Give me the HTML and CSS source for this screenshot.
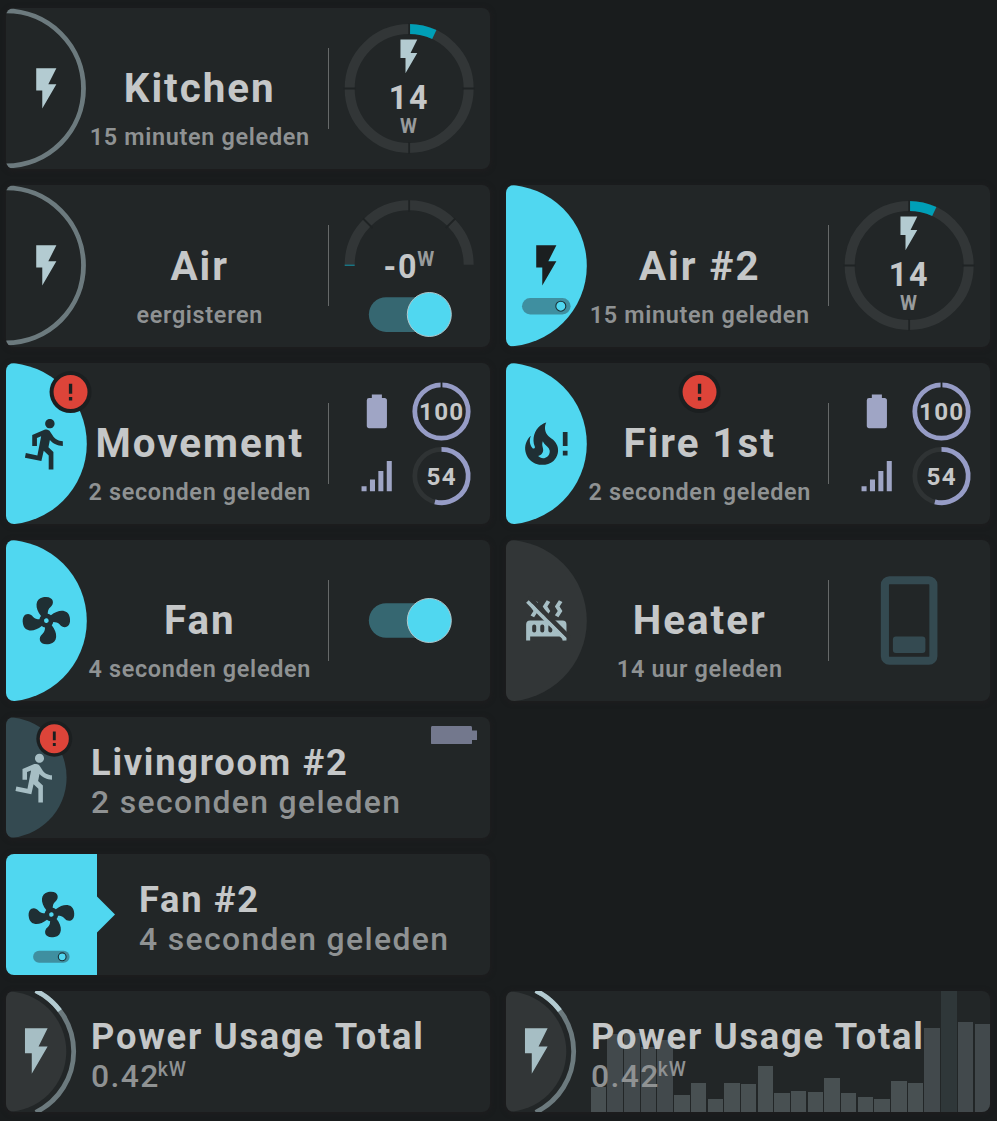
FILE: index.html
```html
<!DOCTYPE html>
<html lang="nl">
<head>
<meta charset="utf-8">
<title>Dashboard</title>
<link rel="stylesheet" href="styles.css">
</head>
<body>
<svg class="defs" aria-hidden="true">
  <symbol id="flash" viewBox="0 0 24 24"><path d="M7,2V13H10V22L17,10H13L17,2H7Z"/></symbol>
  <symbol id="run" viewBox="0 0 24 24"><path d="M13.5,5.5C14.59,5.5 15.5,4.58 15.5,3.5C15.5,2.38 14.59,1.5 13.5,1.5C12.39,1.5 11.5,2.38 11.5,3.5C11.5,4.58 12.39,5.5 13.5,5.5M9.89,19.38L10.89,15L13,17V23H15V15.5L12.89,13.5L13.5,10.5C14.79,12 16.79,13 19,13V11C17.09,11 15.5,10 14.69,8.58L13.69,7C13.29,6.38 12.69,6 12,6C11.69,6 11.5,6.08 11.19,6.08L6,8.28V13H8V9.58L9.79,8.88L8.19,17L3.29,16L2.89,18L9.89,19.38Z"/></symbol>
  <symbol id="fire" viewBox="0 0 24 24"><path transform="translate(-2 0)" d="M17.66 11.2C17.43 10.9 17.15 10.64 16.89 10.38C16.22 9.78 15.46 9.35 14.82 8.72C13.33 7.26 13 4.85 13.95 3C13 3.23 12.17 3.75 11.46 4.32C8.87 6.4 7.85 10.07 9.07 13.22C9.11 13.32 9.15 13.42 9.15 13.55C9.15 13.77 9 13.97 8.8 14.05C8.57 14.15 8.33 14.09 8.14 13.93C8.08 13.88 8.04 13.83 8 13.76C6.87 12.33 6.69 10.28 7.45 8.64C5.78 10 4.87 12.3 5 14.47C5.06 14.97 5.12 15.47 5.29 15.97C5.43 16.57 5.7 17.17 6 17.7C7.08 19.43 8.95 20.67 10.96 20.92C13.1 21.19 15.39 20.8 17.03 19.32C18.86 17.66 19.5 15 18.56 12.72L18.43 12.46C18.22 12 17.66 11.2 17.66 11.2M14.5 17.5C14.22 17.74 13.76 18 13.4 18.1C12.28 18.5 11.16 17.94 10.5 17.28C11.69 17 12.4 16.12 12.61 15.23C12.78 14.43 12.46 13.77 12.33 13C12.21 12.26 12.23 11.63 12.5 10.94C12.69 11.32 12.89 11.7 13.13 12C13.9 13 15.11 13.44 15.37 14.8C15.41 14.94 15.43 15.08 15.43 15.23C15.46 16.05 15.1 16.95 14.5 17.5Z"/><path d="M19 7h2v6h-2zM19 15h2v2h-2z"/></symbol>
  <symbol id="fan" viewBox="0 0 24 24"><path transform="rotate(-11 12 12)" d="M12,11A1,1 0 0,0 11,12A1,1 0 0,0 12,13A1,1 0 0,0 13,12A1,1 0 0,0 12,11M12.5,2C17,2 17.11,5.57 14.75,6.75C13.76,7.24 13.32,8.29 13.13,9.22C13.61,9.42 14.03,9.73 14.35,10.13C18.05,8.13 22.03,8.92 22.03,12.5C22.03,17 18.46,17.1 17.28,14.73C16.78,13.74 15.72,13.3 14.79,13.11C14.59,13.59 14.28,14 13.88,14.34C15.87,18.03 15.08,22 11.5,22C7,22 6.91,18.42 9.27,17.24C10.25,16.75 10.69,15.71 10.89,14.79C10.4,14.59 9.97,14.27 9.65,13.87C5.96,15.85 2,15.07 2,11.5C2,7 5.56,6.89 6.74,9.26C7.24,10.25 8.29,10.68 9.22,10.87C9.41,10.39 9.73,9.97 10.14,9.65C8.15,5.96 8.94,2 12.5,2Z"/></symbol>
  <symbol id="radiator" viewBox="0 0 24 24"><path fill-rule="evenodd" d="M7.95,3L6.53,5.19L7.95,7.4L5.95,10.5L4.22,9.6L5.64,7.39L4.22,5.19L6.22,2.09L7.95,3M13.95,2.89L12.53,5.1L13.95,7.3L11.95,10.4L10.22,9.5L11.64,7.3L10.22,5.1L12.22,2L13.95,2.89M20,2.89L18.56,5.1L20,7.3L18,10.4L16.25,9.5L17.67,7.3L16.25,5.1L18.25,2L20,2.89M2,22V14A2,2 0 0,1 4,12H20A2,2 0 0,1 22,14V22H20V20H4V22H2M6,14A1,1 0 0,0 5,15V17A1,1 0 0,0 7,17V15A1,1 0 0,0 6,14M10,14A1,1 0 0,0 9,15V17A1,1 0 0,0 11,17V15A1,1 0 0,0 10,14M14,14A1,1 0 0,0 13,15V17A1,1 0 0,0 15,17V15A1,1 0 0,0 14,14"/><path class="cut" d="M3.28 2L3.3 -1.2L24.6 20.1L22 20.73Z"/><path d="M3.28 2L2 3.27L20.73 22L22 20.73Z"/></symbol>
  <symbol id="battery" viewBox="0 0 24 24"><path d="M16.67,4H15V2H9V4H7.33A1.33,1.33 0 0,0 6,5.33V20.67C6,21.4 6.6,22 7.33,22H16.67A1.33,1.33 0 0,0 18,20.67V5.33C18,4.6 17.4,4 16.67,4Z"/></symbol>
  <symbol id="signal" viewBox="0 0 24 24"><path d="M3,21H6V18H3M8,21H11V14H8M13,21H16V9H13M18,21H21V3H18V21Z"/></symbol>
  <symbol id="alert" viewBox="-13 -13 26 26"><circle r="12.5" class="ink"/><circle r="10.1" class="red"/><path class="ink" d="M-1-5h2v6h-2zM-1 3h2v2h-2z"/></symbol>
</svg>

<main class="board">
  <section class="card large">
    <svg class="badge" viewBox="0 0 81 161.33"><circle class="ring" cy="80.4" r="77.5"/><use href="#flash" class="pale" x="16.1" y="56.2" width="48.4" height="48.4"/></svg>
    <div class="info"><h2>Kitchen</h2><p>15 minuten geleden</p></div>
    <svg class="tool" viewBox="-.5 0 161.33 161.33">
      <path class="rule" d="M0 40v81"/>
      <circle class="gauge" cx="80.67" cy="80.5" r="59.5"/>
      <path class="gauge value" d="M80.67 21A59.5 59.5 0 0 1 105.8 26.57"/>
      <path class="gaps" d="M80.67 15v12M80.67 134v12M15 80.5h12M134 80.5h12"/>
      <use href="#flash" class="pale" x="60.2" y="28.2" width="40.33" height="40.33"/>
      <text class="num" x="80.5" y="101">14</text><text class="unit" x="80.5" y="125">W</text>
    </svg>
  </section>

  <section class="card large first">
    <svg class="badge" viewBox="0 0 81 161.33"><circle class="ring" cy="80.4" r="77.5"/><use href="#flash" class="pale" x="16.1" y="56.2" width="48.4" height="48.4"/></svg>
    <div class="info"><h2>Air</h2><p>eergisteren</p></div>
    <svg class="tool" viewBox="-.5 0 161.33 161.33">
      <path class="rule" d="M0 40v81"/>
      <path class="gauge" d="M21.17 79.8A59.5 59.5 0 0 1 140.17 79.8"/>
      <path class="tick" d="M16.2 80.2h10"/>
      <path class="gaps" d="M80.67 15v12M34.5 33.5l9.5 9.5M126.8 33.5l-9.5 9.5"/>
      <text class="num" x="80.9" y="93">-0<tspan class="unit" dx="-.8" dy="-12">W</tspan></text>
      <rect class="track" x="40.33" y="112.3" width="80.67" height="34.6" rx="17.3"/><circle class="thumb" cx="100.8" cy="129.5" r="22"/>
    </svg>
  </section>

  <section class="card large">
    <svg class="badge" viewBox="0 0 81 161.33"><circle class="cyan" cy="80.67" r="80.8"/><use href="#flash" class="ink" x="16.1" y="56.2" width="48.4" height="48.4"/><rect class="minitrack" x="16" y="113" width="48.6" height="16.4" rx="8.2"/><circle class="minithumb" cx="54.8" cy="121.2" r="5"/></svg>
    <div class="info"><h2>Air #2</h2><p>15 minuten geleden</p></div>
    <svg class="tool" viewBox="-.5 0 161.33 161.33">
      <path class="rule" d="M0 40v81"/>
      <circle class="gauge" cx="80.67" cy="80.5" r="59.5"/>
      <path class="gauge value" d="M80.67 21A59.5 59.5 0 0 1 105.8 26.57"/>
      <path class="gaps" d="M80.67 15v12M80.67 134v12M15 80.5h12M134 80.5h12"/>
      <use href="#flash" class="pale" x="60.2" y="28.2" width="40.33" height="40.33"/>
      <text class="num" x="80.5" y="101">14</text><text class="unit" x="80.5" y="125">W</text>
    </svg>
  </section>

  <section class="card large">
    <svg class="badge" viewBox="0 0 81 161.33"><circle class="cyan" cy="80.67" r="80.8"/><use href="#run" class="dark" x="12.1" y="52.4" width="56.5" height="56.5"/><use href="#alert" x="42.7" y="7.2" width="43.7" height="43.7"/></svg>
    <div class="info"><h2>Movement</h2><p>2 seconden geleden</p></div>
    <svg class="tool" viewBox="-.5 0 161.33 161.33">
      <path class="rule" d="M0 40v81"/>
      <use href="#battery" class="lilac" x="28.2" y="28.2" width="40.33" height="40.33"/>
      <use href="#signal" class="lilac" x="28" y="93" width="40.33" height="40.33"/>
      <circle class="mini" cx="113" cy="48.5" r="26.7"/><path class="gaps" d="M113 18v7"/>
      <circle class="mini off" cx="113" cy="113" r="26.7"/><path class="mini" d="M113 86.3A26.7 26.7 0 1 1 106.36 138.86"/>
      <text class="pct" x="113.2" y="57">100</text><text class="pct" x="113.2" y="121.8">54</text>
    </svg>
  </section>

  <section class="card large">
    <svg class="badge" viewBox="0 0 81 161.33"><circle class="cyan" cy="80.67" r="80.8"/><use href="#fire" class="dark" x="12.1" y="52.4" width="56.5" height="56.5"/><use href="#alert" x="171.7" y="7.2" width="43.7" height="43.7"/></svg>
    <div class="info"><h2>Fire 1st</h2><p>2 seconden geleden</p></div>
    <svg class="tool" viewBox="-.5 0 161.33 161.33">
      <path class="rule" d="M0 40v81"/>
      <use href="#battery" class="lilac" x="28.2" y="28.2" width="40.33" height="40.33"/>
      <use href="#signal" class="lilac" x="28" y="93" width="40.33" height="40.33"/>
      <circle class="mini" cx="113" cy="48.5" r="26.7"/><path class="gaps" d="M113 18v7"/>
      <circle class="mini off" cx="113" cy="113" r="26.7"/><path class="mini" d="M113 86.3A26.7 26.7 0 1 1 106.36 138.86"/>
      <text class="pct" x="113.2" y="57">100</text><text class="pct" x="113.2" y="121.8">54</text>
    </svg>
  </section>

  <section class="card large">
    <svg class="badge" viewBox="0 0 81 161.33"><circle class="cyan" cy="80.67" r="80.8"/><use href="#fan" class="dark" x="12.1" y="52.4" width="56.5" height="56.5"/></svg>
    <div class="info"><h2>Fan</h2><p>4 seconden geleden</p></div>
    <svg class="tool" viewBox="-.5 0 161.33 161.33">
      <path class="rule" d="M0 40v81"/>
      <rect class="track" x="40.33" y="63.2" width="80.67" height="34.6" rx="17.3"/><circle class="thumb" cx="100.8" cy="80.5" r="22"/>
    </svg>
  </section>

  <section class="card large">
    <svg class="badge" viewBox="0 0 81 161.33"><circle class="grey" cy="80.67" r="80.8"/><use href="#radiator" class="mist" x="16.1" y="56.2" width="48.4" height="48.4"/></svg>
    <div class="info"><h2>Heater</h2><p>14 uur geleden</p></div>
    <svg class="tool" viewBox="-.5 0 161.33 161.33">
      <path class="rule" d="M0 40v81"/>
      <rect class="frame" x="56.4" y="40.2" width="48.5" height="80.6" rx="4.5"/><rect class="teal" x="64.4" y="96.5" width="32.5" height="16.4" rx="3"/>
    </svg>
  </section>

  <section class="card small first">
    <svg class="badge" viewBox="0 0 85 121"><circle class="teal" cy="60.5" r="60.6"/><use href="#alert" x="29.6" y="3" width="37.4" height="37.4"/><use href="#run" class="mist" x="2.9" y="33.3" width="54.4" height="54.4"/></svg>
    <div class="info"><h2>Livingroom #2</h2><p>2 seconden geleden</p></div>
    <svg class="corner" viewBox="0 0 46 18.4"><path d="M1.5 0h38a1.5 1.5 0 0 1 1.5 1.5V4.4h5v9.6h-5v2.9a1.5 1.5 0 0 1-1.5 1.5h-38A1.5 1.5 0 0 1 0 16.9V1.5A1.5 1.5 0 0 1 1.5 0z"/></svg>
  </section>

  <section class="card small first">
    <svg class="badge wide" viewBox="0 0 133 121"><path class="cyan" d="M0 0H91V42.5L109 60.5L91 78.5V121H0z"/><use href="#fan" class="dark" x="18.2" y="33.3" width="54.4" height="54.4"/><rect class="minitrack" x="27.1" y="96.8" width="36.5" height="12" rx="6"/><circle class="minithumb" cx="56.2" cy="102.8" r="3.9"/></svg>
    <div class="info"><h2>Fan #2</h2><p>4 seconden geleden</p></div>
  </section>

  <section class="card small first">
    <svg class="badge" viewBox="0 0 85 121"><circle class="grey" cy="60.5" r="60.3"/><path class="arc" d="M29.7 -.33A67.7 67.7 0 0 1 29.7 121.33"/><path class="arc lit" d="M29.7 -.33A67.7 67.7 0 0 1 53.9 19.6"/><use href="#flash" class="mist" x="3.1" y="32.8" width="54.4" height="54.4"/></svg>
    <div class="info"><h2>Power Usage Total</h2><p>0.42<sup>kW</sup></p></div>
  </section>

  <section class="card small">
    <div class="bars">
      <i style="height:21.2%"></i><i class="high" style="height:64.5%"></i><i class="high" style="height:65.5%"></i><i class="high" style="height:54%"></i><i class="high" style="height:60%"></i><i style="height:14%"></i><i style="height:24.2%"></i><i style="height:11.3%"></i><i style="height:24.5%"></i><i style="height:23.1%"></i><i style="height:38.6%"></i><i style="height:16.3%"></i><i style="height:17.9%"></i><i style="height:17.1%"></i><i style="height:28.7%"></i><i style="height:16.3%"></i><i style="height:13%"></i><i style="height:11.3%"></i><i style="height:26.2%"></i><i style="height:24.5%"></i><i class="high" style="height:70%"></i><i class="peak" style="height:100%"></i><i class="high" style="height:75%"></i><i class="high" style="height:73%"></i>
    </div>
    <svg class="badge" viewBox="0 0 85 121"><circle class="grey" cy="60.5" r="60.3"/><path class="arc" d="M29.7 -.33A67.7 67.7 0 0 1 29.7 121.33"/><path class="arc lit" d="M29.7 -.33A67.7 67.7 0 0 1 53.9 19.6"/><use href="#flash" class="mist" x="3.1" y="32.8" width="54.4" height="54.4"/></svg>
    <div class="info"><h2>Power Usage Total</h2><p>0.42<sup>kW</sup></p></div>
  </section>
</main>
</body>
</html>
```
FILE: styles.css
```css
* { box-sizing: border-box; }
body { margin: 0; background: #191c1d; font-family: Roboto, sans-serif; color: #c5c7c8; }
.defs { display: none; }
.board {
  display: grid;
  grid-template-columns: 484px 484px;
  grid-template-rows: repeat(4, 161.33px) repeat(3, 121px);
  gap: 16px;
  padding: 8px 7px 9px 6px;
}
.first { grid-column: 1; }
.board > .card:first-child { grid-column: 1; }
.card {
  position: relative;
  display: flex;
  overflow: hidden;
  border-radius: 8px;
  background: #222627;
  box-shadow: 0 1px 5px 1px rgba(33, 30, 32, .6);
}
.badge { flex: none; overflow: visible; position: relative; z-index: 1; }
.large .badge { width: 81px; height: 161.33px; }
.small .badge { width: 85px; height: 121px; }
.small .badge.wide { width: 133px; }
.tool { flex: none; width: 161.33px; height: 161.33px; overflow: visible; }

.info { position: relative; white-space: nowrap; }
.info h2, .info p { margin: 0; }
.info h2 { font-weight: 700; color: #c5c7c8; }
.info p { font-weight: 500; color: #8f9293; }
.large .info {
  display: flex; flex-direction: column; align-items: center;
  width: 225.5px; margin-right: 15.5px; padding-top: 57.3px; gap: 10.2px;
}
.large h2 { font-size: 40.33px; line-height: 48px; letter-spacing: 2px; }
.large p { font-size: 23.4px; line-height: 28px; font-weight: 600; letter-spacing: .68px; }
.small .info { padding-top: 24.6px; }
.small h2 { font-size: 36.3px; line-height: 42px; letter-spacing: 1.75px; }
.small p { font-size: 31.9px; line-height: 37px; letter-spacing: 1.35px; }
.small sup { font-size: 19.4px; line-height: 0; vertical-align: 11px; letter-spacing: 1px; margin-left: -1.9px; }
.corner { position: absolute; right: 13px; top: 8.7px; width: 46px; height: 18.4px; fill: #73788d; }

text { font-weight: 700; text-anchor: middle; fill: #c5c7c8; }
.num { font-size: 32.3px; letter-spacing: 1.6px; }
.pct { font-size: 24.2px; letter-spacing: 1.2px; }
.unit { font-size: 19.4px; letter-spacing: 1px; fill: #989b9c; }

.pale { fill: #b3cbd1; }
.mist { fill: #a6bec4; }
.ink { fill: #1b1f20; }
.dark { fill: #1f2f34; }
.cyan { fill: #50d7f0; }
.grey, .cut { fill: #323637; }
.teal { fill: #344a51; }
.lilac { fill: #9fa5c5; }
.red { fill: #dd4439; }

.ring { fill: none; stroke: #6c7a7e; stroke-width: 4.8; }
.rule { fill: none; stroke: #666969; stroke-width: 1; }
.gauge { fill: none; stroke: #323637; stroke-width: 10; }
.gauge.value { stroke: #009fb7; }
.gaps { fill: none; stroke: #1f2324; stroke-width: 1.8; }
.tick { stroke: #159aae; stroke-width: 1; }
.mini { fill: none; stroke: #969cc6; stroke-width: 4.8; }
.mini.off { stroke: #2f3334; }
.track { fill: #366771; }
.thumb { fill: #50d7f0; stroke: #b0c8cd; stroke-width: 1; }
.minitrack { fill: #3f8fa0; }
.minithumb { fill: #50d7f0; stroke: #1b3238; stroke-width: 1.1; }
.frame { fill: none; stroke: #344a51; stroke-width: 8.1; }
.arc { fill: none; stroke: #6c7a7e; stroke-width: 4.8; }
.arc.lit { stroke: #b3cbd1; }

.bars {
  position: absolute; inset: 0 0 0 84.7px;
  display: flex; align-items: flex-end; gap: 1.25px;
}
.bars i { flex: 1; background: #485052; }
.bars .high { background: #42494c; }
.bars .peak { background: #2f3739; }
```
